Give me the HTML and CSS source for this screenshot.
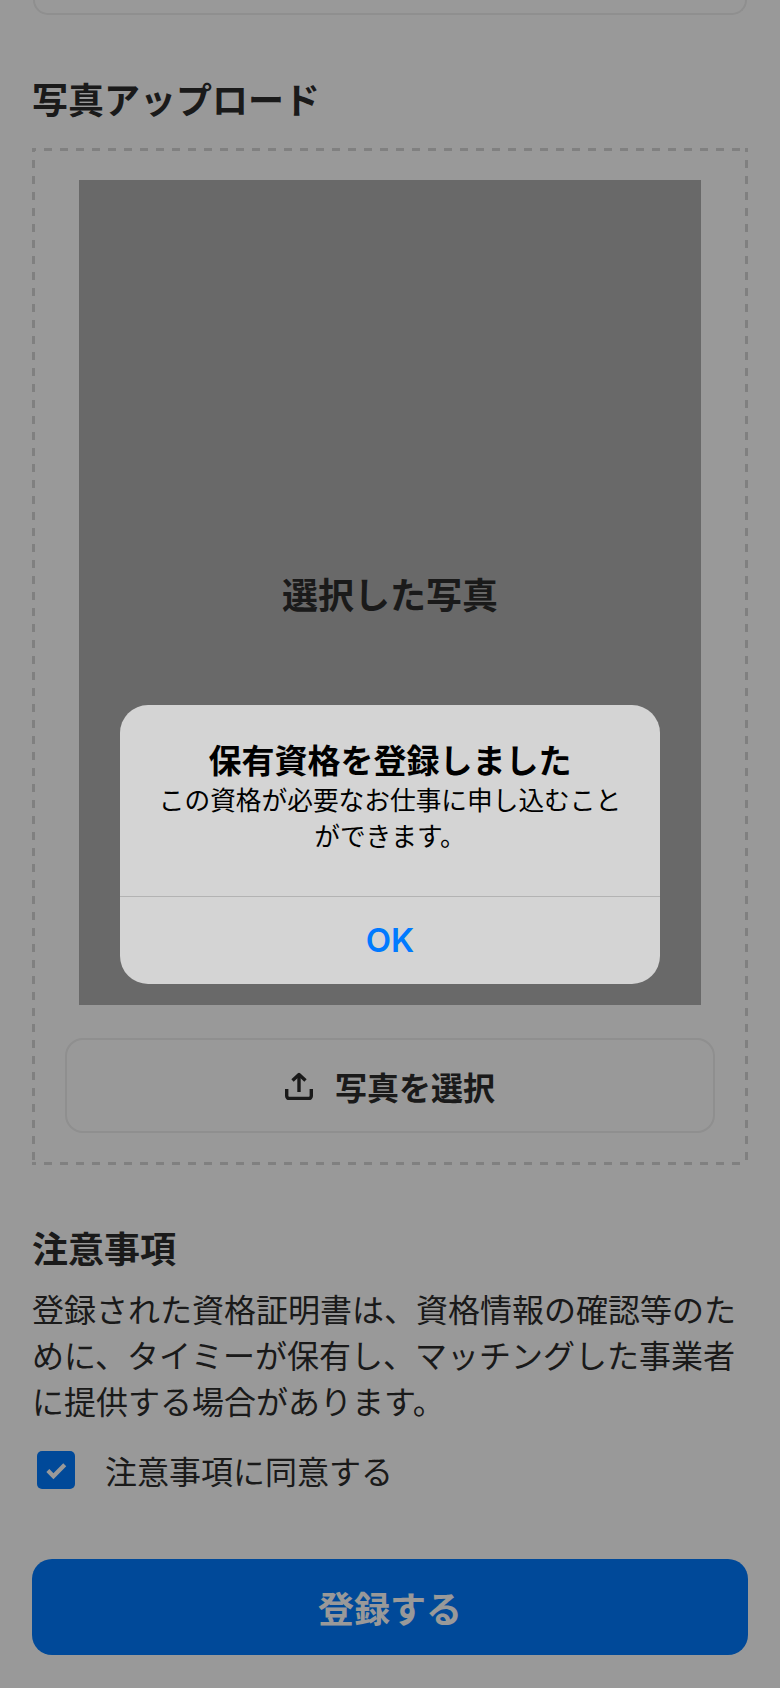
FILE: index.html
```html
<!DOCTYPE html>
<html lang="ja">
<head>
    <meta charset="UTF-8">
    <meta name="viewport" content="width=device-width, initial-scale=1.0">
    <title>保有資格の登録</title>
    <link rel="stylesheet" href="styles.css">
</head>
<body>
    <main class="page">
        <div class="prev-card"></div>

        <h2 class="section-title upload-title">写真アップロード</h2>
        <section class="upload-box">
            <div class="photo">選択した写真</div>
            <button class="select-btn">
                <svg class="upload-icon" viewBox="0 0 28 28" fill="none" stroke="currentColor" stroke-width="3.4">
                    <path d="M14 20V3"/>
                    <path d="M7.5 8.5L14 2.5l6.500 6" stroke-linejoin="round"/>
                    <path d="M1.700 17v7a2.500 2.500 0 0 0 2.500 2.500h19.600a2.500 2.500 0 0 0 2.500-2.500v-7"/>
                </svg>
                <span>写真を選択</span>
            </button>
        </section>

        <h2 class="section-title notes-title">注意事項</h2>
        <p class="notes">登録された資格証明書は、資格情報の確認等のために、タイミーが保有し、マッチングした事業者に提供する場合があります。</p>

        <label class="agree">
            <span class="checkbox">
                <svg viewBox="0 0 24 24" fill="none" stroke="currentColor" stroke-width="3.600">
                    <path d="M5 12.500l4.800 4.800L19.500 7.500"/>
                </svg>
            </span>
            <span>注意事項に同意する</span>
        </label>

        <button class="submit-btn">登録する</button>
    </main>

    <div class="scrim">
        <div class="dialog">
            <div class="dialog-body">
                <h3 class="dialog-title">保有資格を登録しました</h3>
                <p class="dialog-text">この資格が必要なお仕事に申し込むことができます。</p>
            </div>
            <div class="dialog-action">OK</div>
        </div>
    </div>
</body>
</html>
```

FILE: styles.css
```css
* {
    box-sizing: border-box;
}

html, body {
    margin: 0;
    height: 1688px;
    overflow: hidden;
}

body {
    font-family: "Noto Sans CJK JP", "Noto Sans", sans-serif;
    background: #ffffff;
    color: #2c2c2c;
    position: relative;
}

.page {
    padding: 0 32px;
}

.prev-card {
    height: 15px;
    margin: 0 1px;
    border: 2px solid #eeeeee;
    border-top: none;
    border-radius: 0 0 18px 18px;
}

.section-title {
    margin: 0;
    font-size: 36px;
    line-height: 52px;
    font-weight: 700;
}

.upload-title {
    margin-top: 57px;
    margin-bottom: 24px;
}

/* dash length and gap are fixed, a dashed border would not repeat the same way */
.upload-box {
    padding: 32px 33px;
    background-image:
        repeating-linear-gradient(90deg, #d6d6d6 0 4px, transparent 4px 12px, #d6d6d6 12px 16px),
        repeating-linear-gradient(90deg, #d6d6d6 0 4px, transparent 4px 12px, #d6d6d6 12px 16px),
        repeating-linear-gradient(180deg, #d6d6d6 0 4px, transparent 4px 12px, #d6d6d6 12px 16px),
        repeating-linear-gradient(180deg, #d6d6d6 0 4px, transparent 4px 12px, #d6d6d6 12px 16px);
    background-size: 100% 3px, 100% 3px, 3px 100%, 3px 100%;
    background-position: top left, bottom left, top left, top right;
    background-repeat: no-repeat;
}

.photo {
    width: 622px;
    height: 825px;
    margin: 0 auto;
    background: #afafaf;
    display: flex;
    align-items: center;
    justify-content: center;
    font-size: 36px;
    font-weight: 700;
}

.select-btn {
    width: 100%;
    height: 95px;
    margin-top: 33px;
    display: flex;
    align-items: center;
    justify-content: center;
    gap: 22px;
    background: transparent;
    border: 2px solid #eeeeee;
    border-radius: 18px;
    color: inherit;
    font-family: inherit;
    font-size: 32px;
    font-weight: 700;
}

.upload-icon {
    width: 28px;
    height: 28px;
}

.notes-title {
    margin-top: 56px;
}

.notes {
    margin: 12px 0 0;
    font-size: 32px;
    line-height: 46px;
}

.agree {
    display: flex;
    align-items: center;
    gap: 30px;
    margin: 24px 0 0 5px;
    font-size: 32px;
    line-height: 46px;
}

.checkbox {
    width: 38px;
    height: 38px;
    border-radius: 5px;
    background: #007bff;
    color: #ffffff;
    display: flex;
    align-items: center;
    justify-content: center;
}

.checkbox svg {
    width: 28px;
    height: 28px;
}

.submit-btn {
    display: block;
    width: 100%;
    height: 96px;
    margin-top: 66px;
    background: #007bff;
    border: none;
    border-radius: 20px;
    color: #ffffff;
    font-family: inherit;
    font-size: 36px;
    font-weight: 700;
}

/* overlay */
.scrim {
    position: absolute;
    inset: 0;
    background: rgba(0, 0, 0, 0.4);
    display: flex;
    align-items: center;
    justify-content: center;
}

.dialog {
    width: 540px;
    height: 279px;
    background: #d4d4d4;
    border-radius: 28px;
    display: flex;
    flex-direction: column;
    color: #000000;
    text-align: center;
}

.dialog-body {
    height: 192px;
    padding: 32px 32px 0;
    border-bottom: 1px solid #b3b3b3;
}

.dialog-title {
    margin: 0;
    font-size: 33px;
    line-height: 44px;
    font-weight: 700;
}

.dialog-text {
    margin: 0;
    font-size: 25.700px;
    line-height: 36px;
}

.dialog-action {
    flex: 1;
    display: flex;
    align-items: center;
    justify-content: center;
    font-family: Inter, "Noto Sans", sans-serif;
    font-size: 33px;
    font-weight: 600;
    color: #007aff;
}
```
